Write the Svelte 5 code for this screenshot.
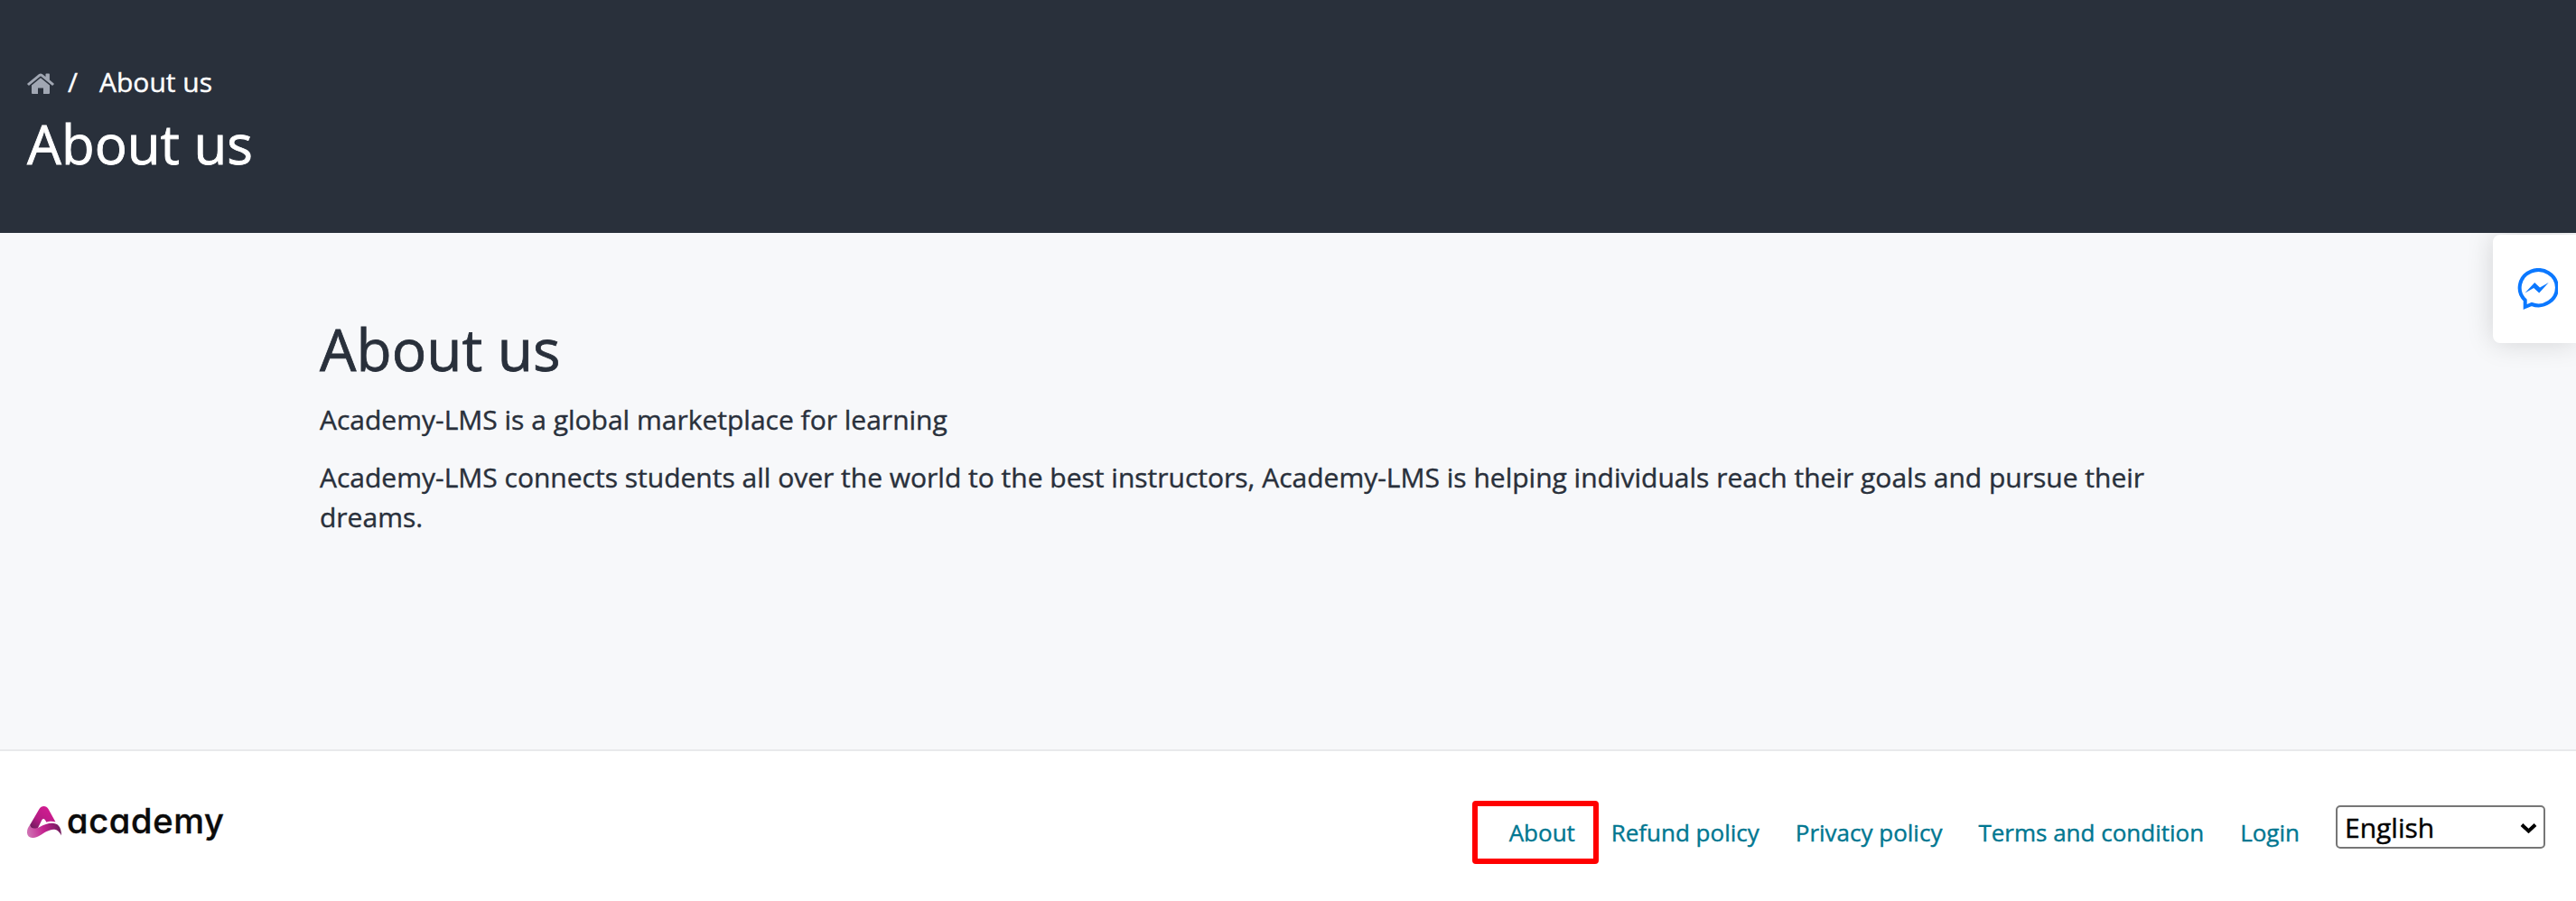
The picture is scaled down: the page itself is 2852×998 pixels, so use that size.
<script>
  const links = ['About', 'Refund policy', 'Privacy policy', 'Terms and condition', 'Login'];
</script>

<div class="page">
  <header>
    <nav class="crumbs">
      <svg class="home" viewBox="0 0 30 24" aria-label="Home">
        <path class="roof" d="M.4 11.4 12.9 1.2Q15 -.4 17.1 1.2L20.5 4V1.2Q20.5.5 21.2.5H24.2Q24.9.5 24.9 1.2V7.5L29.6 11.4Q30 12 29.6 12.5L28.5 13.6Q28 14 27.5 13.6L15.6 3.8Q15 3.4 14.4 3.8L2.5 13.6Q2 14 1.500 13.600L.4 12.500Q0 12 .4 11.400Z" />
        <path class="roof" d="M15 5.200 25 13.400V22Q25 23 24 23H18V16.500H12V23H6Q5 23 5 22V13.400Z" />
      </svg>
      <span class="sep">/</span>
      <span>About us</span>
    </nav>
    <h1>About us</h1>
  </header>

  <main>
    <article>
      <h2>About us</h2>
      <p>Academy-LMS is a global marketplace for learning</p>
      <p>Academy-LMS connects students all over the world to the best instructors, Academy-LMS is helping individuals reach their goals and pursue their dreams.</p>
    </article>
    <aside class="chat">
      <svg viewBox="0 0 46 47" aria-label="Messenger">
        <path class="ring" d="M9.700 43V35.500A20.600 19.600 0 1 1 17 40Z" />
        <path class="bolt" d="M9.500 27.400 20.200 16 26 21.400 35.700 16 25.200 27.400 19.200 22Z" />
      </svg>
    </aside>
  </main>

  <footer>
    <div class="logo">
      <svg viewBox="0 0 38 35">
        <defs>
          <linearGradient id="top" x1=".1" y1="1" x2=".8" y2=".2">
            <stop offset="0" stop-color="#6a1c5a" />
            <stop offset=".45" stop-color="#b51c84" />
            <stop offset="1" stop-color="#d01c90" />
          </linearGradient>
          <linearGradient id="low" x1="0" y1=".6" x2="1" y2=".5">
            <stop offset="0" stop-color="#cf74b4" />
            <stop offset=".5" stop-color="#c4228f" />
            <stop offset="1" stop-color="#6e1c5c" />
          </linearGradient>
        </defs>
        <path fill="url(#top)" d="M3 21 13.500 3C15.700-1 21.300-1 23.500 3L31.500 17.500C27 16.300 24 17 21.500 17.800L19.800 15Q18 13 16.500 15L12 24C9 26.500 4 26 3 21Z" />
        <path fill="url(#low)" d="M3 21C4 25 9 25.500 14 23 24 17.500 38 14.500 38 32.500 32 20 22 27.500 14 32.500 6 37.500-.5 34.500 0 28.500 0 25 1.500 23 3 21Z" />
      </svg>
      <span>academy</span>
    </div>
    <ul>
      {#each links as link, i}
        <li class:marked={i === 0}><a href="#top">{link}</a></li>
      {/each}
    </ul>
    <div class="select">
      <span>English</span>
      <svg viewBox="0 0 19 12"><path d="M2 2.500 9.500 9.500 17 2.500" /></svg>
    </div>
  </footer>
</div>

<style>
  .page {
    display: flex;
    flex-direction: column;
    width: 2852px;
    height: 998px;
    overflow: hidden;
    background: #fff;
    color: #29303b;
    font: 30px/44px 'Open Sans', sans-serif;
    -webkit-text-stroke: 0.4px currentColor;
  }
  header {
    position: relative;
    z-index: 1;
    box-sizing: border-box;
    height: 258px;
    padding: 69px 30px 0;
    background: #29303b;
    color: #fff;
  }
  .crumbs { display: flex; align-items: center; height: 44px; }
  .home { width: 30px; height: 24px; margin-top: 3px; }
  .roof { fill: #a1a7b3; }
  .sep { margin: 0 24px 0 15px; }
  h1 { margin: 10px 0 0; font-size: 60px; line-height: 72px; font-weight: 400; -webkit-text-stroke-width: 0.8px; }
  main {
    display: flex;
    justify-content: space-between;
    align-items: flex-start;
    box-sizing: border-box;
    height: 574px;
    padding-left: 354px;
    border-bottom: 2px solid #e8e9eb;
    background: #f7f8fa;
  }
  article { width: 2100px; padding-top: 90px; }
  h2 { margin: 0 0 17px; font-size: 64px; line-height: 78px; font-weight: 400; -webkit-text-stroke-width: 0.8px; }
  p { margin: 0 0 20px; }
  .chat {
    box-sizing: border-box;
    width: 92px;
    height: 120px;
    margin-top: 2px;
    padding: 37px 0 0 26px;
    border-radius: 8px 0 0 8px;
    background: #fff;
    box-shadow: 0 0 30px rgba(0, 0, 0, 0.15);
  }
  .chat svg { display: block; width: 46px; height: 47px; }
  .ring { fill: none; stroke: #0b78ff; stroke-width: 4; }
  .bolt { fill: #0b78ff; }
  footer { display: flex; align-items: flex-start; height: 166px; padding-left: 30px; padding-right: 34px; }
  .logo { display: flex; align-items: flex-start; margin-top: 60px; color: #0b0b0b; }
  .logo svg { width: 38px; height: 35px; margin-top: 1px; }
  .logo span { margin: -5px 0 0 6px; font: 500 38px/44px Inter, sans-serif; font-feature-settings: 'cv11'; letter-spacing: 0.7px; }
  ul { display: flex; align-items: flex-start; margin: 55px 0 0 auto; padding: 0; list-style: none; font-size: 26px; }
  li { box-sizing: border-box; height: 70px; padding: 13px 0 0 40px; }
  .marked { width: 140px; padding: 7px 0 0 35px; border: 6px solid #f00; border-radius: 4px; }
  .marked + li { padding-left: 14px; }
  a { color: #007791; text-decoration: none; }
  .select {
    display: flex;
    align-items: center;
    justify-content: space-between;
    box-sizing: border-box;
    width: 232px;
    height: 48px;
    margin: 60px 0 0 40px;
    padding: 1px 7px 0 8px;
    border: 2px solid #767676;
    border-radius: 5px;
    color: #000;
  }
  .select svg { width: 19px; height: 12px; }
  .select path { fill: none; stroke: #000; stroke-width: 4; }
  :global(body) { margin: 0; }
</style>
